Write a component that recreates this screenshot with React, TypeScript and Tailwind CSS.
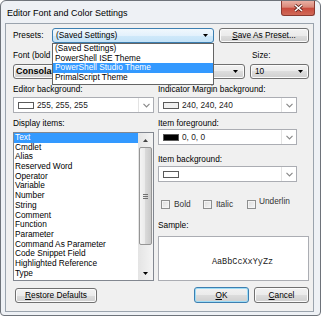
import React from "react";

const btnBg =
  "bg-[linear-gradient(#f2f2f2,#ebebeb_50%,#dddddd_50%,#cfcfcf)] border border-[#707070] rounded-[3px] shadow-[inset_0_0_0_1px_#fbfbfb]";

const Arrow = () => (
  <svg width="5" height="3" viewBox="0 0 5 3" className="shrink-0">
    <path d="M0 0h5L2.5 3z" fill="#000" />
  </svg>
);

const Chevron = () => (
  <svg width="7" height="5" viewBox="0 0 7 5">
    <path d="M0.5 0.8 3.5 3.8 6.5 0.8" fill="none" stroke="#8a8a8a" strokeWidth="1.2" />
  </svg>
);

const Button = ({
  children,
  className = "",
  isDefault = false,
}: {
  children: React.ReactNode;
  className?: string;
  isDefault?: boolean;
}) => (
  <div
    className={`flex items-center justify-center ${
      isDefault
        ? "bg-[linear-gradient(#f2f2f2,#ebebeb_50%,#dddddd_50%,#cfcfcf)] border border-[#3c7fb1] rounded-[3px] shadow-[inset_0_0_0_1px_#9edcf6]"
        : btnBg
    } ${className}`}
  >
    {children}
  </div>
);

const ColorCombo = ({ swatch, text }: { swatch?: string; text?: string }) => (
  <div className="flex h-[16px] items-center border border-[#abadb3] bg-white">
    <div
      className="ml-[4px] h-[7px] w-[16px] border border-[#5a5a5a]"
      style={{ backgroundColor: swatch ?? "#ffffff" }}
    />
    <span className="ml-[3px] flex-1 text-[#222]">{text}</span>
    <div className="flex h-full w-[15px] items-center justify-center border-l border-[#e3e3e3]">
      <Chevron />
    </div>
  </div>
);

const Checkbox = ({ label, className = "" }: { label: string; className?: string }) => (
  <div className={`flex items-center ${className}`}>
    <div className="h-[9px] w-[9px] border border-[#8e8f8f] bg-[linear-gradient(135deg,#dcdcdc,#f6f6f6)] shadow-[inset_0_0_0_1px_#f4f4f4]" />
    <span className="ml-[4px] text-[#333]">{label}</span>
  </div>
);

const items = [
  "Text",
  "Cmdlet",
  "Alias",
  "Reserved Word",
  "Operator",
  "Variable",
  "Number",
  "String",
  "Comment",
  "Function",
  "Parameter",
  "Command As Parameter",
  "Code Snippet Field",
  "Highlighted Reference",
  "Type",
];

const presets = ["(Saved Settings)", "PowerShell ISE Theme", "PowerShell Studio Theme", "PrimalScript Theme"];

export default function App() {
  return (
    <div className="h-[317px] w-[322px] bg-white font-['Liberation_Sans',Arial,sans-serif] text-[8.3px] leading-[11px] text-black">
      <div className="flex h-[316px] w-[321px] flex-col rounded-t-[6px] rounded-b-[4px] border border-[#6e737a] bg-[#eef1f5] pb-[3px] pl-[4px] pr-[6px]">
        {/* Title bar */}
        <div className="flex h-[22px] shrink-0 items-start justify-between">
          <span className="mt-[6px] pl-[2px] text-[9px] leading-[12px]">Editor Font and Color Settings</span>
          <div className="-mr-[1px] flex h-[15px] w-[34px] items-center justify-center rounded-b-[3px] border border-t-0 border-[#8a3a30] bg-[linear-gradient(#eab0a4,#d98878_45%,#c94a3c_50%,#d06a58)]">
            <svg width="9" height="8" viewBox="0 0 9 8">
              <path d="M1 1l7 6M8 1 1 7" stroke="#5a2018" strokeWidth="3" />
              <path d="M1 1l7 6M8 1 1 7" stroke="#fff" strokeWidth="1.6" />
            </svg>
          </div>
        </div>

        {/* Content */}
        <div className="flex flex-1 flex-col border border-[#9aa3ad] bg-[#f0f0f0] pl-[7px] pr-[4px] pt-[4px]">
          {/* Presets */}
          <div className="relative z-10 flex h-[15px] items-center">
            <span className="w-[39px]">Presets:</span>
            <div className="relative h-full w-[162px]">
              <div className="flex h-full items-center justify-between rounded-[3px] border border-[#3c7fb1] bg-[linear-gradient(#f1f8fd,#e3f1fc_50%,#d0e9fa_50%,#c4e3f8)] pl-[3px] pr-[5px]">
                <span>(Saved Settings)</span>
                <Arrow />
              </div>
              {/* Open dropdown */}
              <div className="absolute left-0 top-[15px] w-[162px] border border-[#646464] bg-white pb-[1px]">
                {presets.map((p, i) => (
                  <div
                    key={p}
                    className={`h-[9.7px] pl-[2px] leading-[9.7px] ${i === 2 ? "bg-[#3399ff] text-white" : ""}`}
                  >
                    {p}
                  </div>
                ))}
              </div>
            </div>
            <Button className="ml-[5px] h-full w-[90px]">
              <span>
                <span className="underline underline-offset-[1px]">S</span>ave As Preset...
              </span>
            </Button>
          </div>

          {/* Font / Size labels (partly under the open list) */}
          <div className="mt-[7px] flex h-[11px]">
            <span className="w-[39px] overflow-hidden whitespace-nowrap">Font (bold</span>
            <span className="ml-[200px]">Size:</span>
          </div>

          {/* Font / Size combos */}
          <div className="mt-[3px] flex h-[15px] gap-[5px]">
            <div className={`flex w-[232px] items-center justify-between pl-[2px] pr-[6px] ${btnBg}`}>
              <span className="whitespace-nowrap text-[9px] font-bold">Consolas</span>
              <Arrow />
            </div>
            <div className={`flex w-[59px] items-center justify-between pl-[4px] pr-[5px] ${btnBg}`}>
              <span>10</span>
              <Arrow />
            </div>
          </div>

          {/* Background labels */}
          <div className="mt-[5px] flex h-[11px] gap-[4px]">
            <span className="w-[141px]">Editor background:</span>
            <span>Indicator Margin background:</span>
          </div>
          <div className="mt-[2px] flex gap-[4px]">
            <div className="w-[141px]">
              <ColorCombo text="255, 255, 255" />
            </div>
            <div className="w-[139px]">
              <ColorCombo swatch="#f0f0f0" text="240, 240, 240" />
            </div>
          </div>

          {/* Columns */}
          <div className="flex gap-[4px]">
            {/* Display items */}
            <div className="flex w-[141px] flex-col">
              <span className="mt-[5px] h-[11px]">Display items:</span>
              <div className="mt-[3px] flex h-[149px] border border-[#828790] bg-white">
                <div className="flex-1 overflow-hidden">
                  {items.map((it, i) => (
                    <div
                      key={it}
                      className={`h-[9.7px] pl-[1px] leading-[9.7px] ${i === 0 ? "bg-[#3399ff] text-white" : ""}`}
                    >
                      {it}
                    </div>
                  ))}
                </div>
                {/* Scrollbar */}
                <div className="flex w-[15px] flex-col bg-[linear-gradient(90deg,#e4e4e4,#f4f4f4)]">
                  <div className="flex h-[14px] items-center justify-center">
                    <svg width="5" height="3" viewBox="0 0 5 3">
                      <path d="M0 3h5L2.5 0z" fill="#444" />
                    </svg>
                  </div>
                  <div className="mx-[1px] flex h-[98px] items-center justify-center rounded-[2px] border border-[#959595] bg-[linear-gradient(90deg,#f4f4f4,#e9e9e9_50%,#d9d9d9_50%,#c9c9c9)]">
                    <div className="flex flex-col gap-[1px]">
                      <div className="h-[1px] w-[5px] bg-[#707070]" />
                      <div className="h-[1px] w-[5px] bg-[#707070]" />
                      <div className="h-[1px] w-[5px] bg-[#707070]" />
                    </div>
                  </div>
                  <div className="flex-1" />
                  <div className="flex h-[14px] items-center justify-center">
                    <Arrow />
                  </div>
                </div>
              </div>
            </div>

            {/* Right side */}
            <div className="flex w-[151px] flex-col">
              <span className="mt-[5px] h-[11px]">Item foreground:</span>
              <div className="w-[139px]">
                <ColorCombo swatch="#000000" text="0, 0, 0" />
              </div>
              <span className="mt-[9px] h-[11px]">Item background:</span>
              <div className="mt-[1px] w-[139px]">
                <ColorCombo />
              </div>
              <div className="mt-[17px] flex h-[10px] items-center pl-[3px]">
                <Checkbox label="Bold" className="w-[42px]" />
                <Checkbox label="Italic" className="w-[44px]" />
                <div className="flex items-center">
                  <div className="h-[9px] w-[9px] border border-[#8e8f8f] bg-[linear-gradient(135deg,#dcdcdc,#f6f6f6)] shadow-[inset_0_0_0_1px_#f4f4f4]" />
                  <span className="-mt-[6px] ml-[3px] text-[#333]">Underlin</span>
                </div>
              </div>
              <span className="mt-[11px] h-[11px]">Sample:</span>
              <div className="mt-[5px] flex h-[45px] items-center justify-center border border-[#abadb3] bg-white pl-[18px] pt-[8px]">
                <span className="font-['Liberation_Mono',monospace] text-[8.5px] text-[#222]">AaBbCcXxYyZz</span>
              </div>
            </div>
          </div>

          {/* Bottom buttons */}
          <div className="mt-[6px] flex items-start">
            <Button className="ml-[2px] mt-[1px] h-[15px] w-[82px]">
              <span>
                <span className="underline underline-offset-[1px]">R</span>estore Defaults
              </span>
            </Button>
            <div className="flex-1" />
            <Button isDefault className="h-[16px] w-[55px]">
              <span className="underline underline-offset-[1px]">O</span>K
            </Button>
            <Button className="ml-[5px] h-[16px] w-[55px]">
              <span>
                <span className="underline underline-offset-[1px]">C</span>ancel
              </span>
            </Button>
          </div>
        </div>
      </div>
    </div>
  );
}
